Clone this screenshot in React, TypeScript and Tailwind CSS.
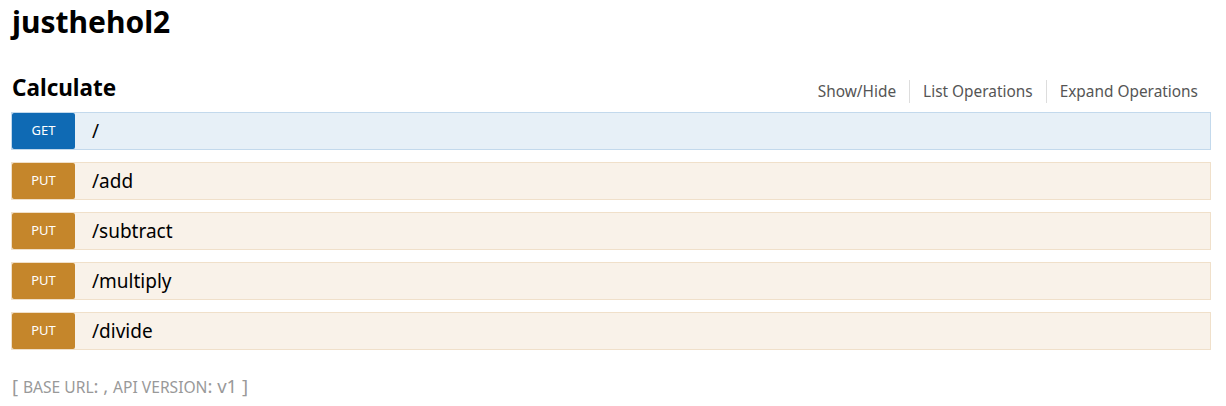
import * as React from "react";

const OPS = [
    { method: "GET", path: "/" },
    { method: "PUT", path: "/add" },
    { method: "PUT", path: "/subtract" },
    { method: "PUT", path: "/multiply" },
    { method: "PUT", path: "/divide" },
];

function Operation({ method, path }: { method: string; path: string }) {
    const isGet = method === "GET";
    return (
        <li
            className={
                isGet
                    ? "flex items-center h-[38px] border border-[#c3d9ec] bg-[#e7f0f7]"
                    : "flex items-center h-[38px] border border-[#f0e0ca] bg-[#f9f2e9]"
            }
        >
            <span
                className={
                    isGet
                        ? "flex items-center justify-center w-[63px] h-[36px] rounded-[2px] bg-[#0f6ab4] text-white text-[13px]"
                        : "flex items-center justify-center w-[63px] h-[36px] rounded-[2px] bg-[#c5862b] text-white text-[13px]"
                }
            >
                {method}
            </span>
            <span className="ml-[17px] text-[19px] text-black">{path}</span>
        </li>
    );
}

export default function App() {
    return (
        <div
            className="w-[1226px] h-[406px] bg-white pl-[11px] pt-[2px]"
            style={{ fontFamily: '"Noto Sans", "Open Sans", sans-serif' }}
        >
            <h1 className="pl-[1px] text-[30px] font-bold text-black leading-[40px]">justhehol2</h1>

            <div className="w-[1200px] mt-[29px]">
                {/* resource heading + actions */}
                <div className="flex items-end justify-between h-[34px] pb-[2px]">
                    <h2 className="pl-[1px] text-[22.5px] font-bold text-black leading-[30px]">Calculate</h2>
                    <ul className="flex items-center text-[15.4px] text-[#555] pr-[13px]">
                        <li className="pr-[13px]">Show/Hide</li>
                        <li className="px-[13px] border-l border-[#ddd]">List Operations</li>
                        <li className="pl-[13px] border-l border-[#ddd]">Expand Operations</li>
                    </ul>
                </div>

                <ul className="flex flex-col gap-[12px] mt-[7px]">
                    {OPS.map((op, i) => (
                        <Operation key={i} method={op.method} path={op.path} />
                    ))}
                </ul>

                {/* footer */}
                <div className="mt-[24px] pl-[1px] text-[18.5px] text-[#999] leading-[24px]">
                    [ <span className="text-[15.6px] uppercase">base url</span>: , <span className="text-[15.6px] uppercase">api version</span>: v1 ]
                </div>
            </div>
        </div>
    );
}
